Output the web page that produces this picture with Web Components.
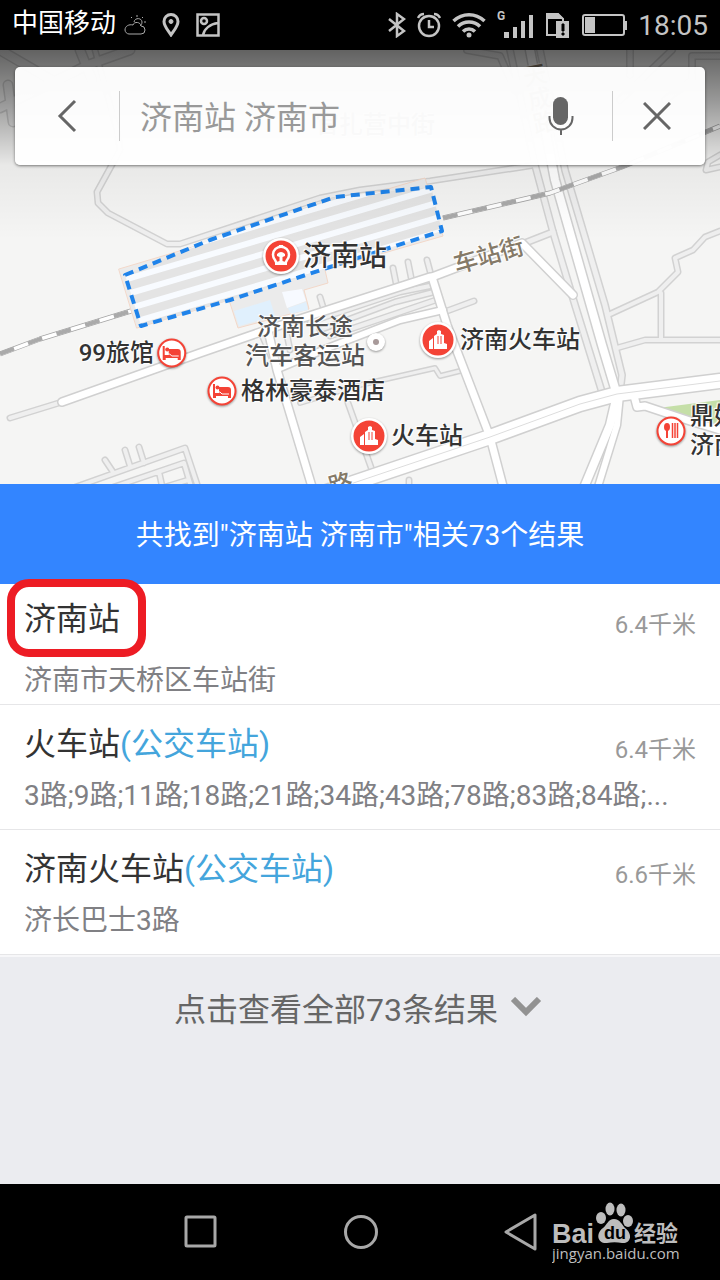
<!DOCTYPE html>
<html lang="zh-CN">
<head>
<meta charset="utf-8">
<meta name="viewport" content="width=device-width, initial-scale=1">
<title>济南站 济南市</title>
<style>
    body {
        margin: 0;
        background: #ebecf0;
        font-family: Roboto, "Noto Sans CJK SC", sans-serif;
        color: #333;
    }
</style>
</head>
<body>
<search-screen></search-screen>

<template id="status-bar">
<style>
    :host {
        display: flex;
        justify-content: space-between;
        align-items: center;
        height: 50px;
        padding: 0 12px;
        background: #000;
        color: #c4c4c4;
    }
    div {
        display: flex;
        align-items: center;
    }
    .left { gap: 16px; }
    .right { gap: 11px; }
    .carrier {
        font-size: 26px;
        line-height: 28px;
        padding-bottom: 4px;
        color: #fff;
        margin-right: -8px;
    }
    .clock { font-size: 28px; }
    svg { display: block; }
</style>
<div class="left">
    <span class="carrier">中国移动</span>
    <svg width="22" height="22" viewBox="0 0 22 22" fill="none" stroke="#aaa"><path d="M5 20h12a4 4 0 0 0 0-8c0-4-7-5-8-1-4-1-8 1-8 5 0 2 2 4 4 4zM10 8c1-5 8-4 8 0 0 2-1 3-2 4M13 1v2M19 3l-1 1M20 8h2M7 3l1 1"/></svg>
    <svg width="18" height="24" viewBox="0 0 18 24" fill="none" stroke="#c4c4c4" stroke-width="3"><path d="M9 22C5 16 2 13 2 8.500a7 7 0 0 1 14 0C16 13 13 16 9 22z"/><circle cx="9" cy="8.500" r="2" fill="#c4c4c4" stroke-width="1"/></svg>
    <svg width="24" height="24" viewBox="0 0 24 24" fill="none" stroke="#c4c4c4" stroke-width="2.500"><path d="M1.500 1.500h21v21h-21zM7 22c1-6 7-11 15-12"/><circle cx="8" cy="8" r="3"/></svg>
</div>
<div class="right">
    <svg width="18" height="26" viewBox="0 0 18 26" fill="none" stroke="#c4c4c4" stroke-width="2.500"><path d="M1 7l15 12-7 5V2l7 5L1 19"/></svg>
    <svg width="24" height="26" viewBox="0 0 24 26" fill="none" stroke="#c4c4c4" stroke-width="2.500"><circle cx="12" cy="14" r="10"/><path d="M12 8v7h5M1 6c1-2 3-4 6-4M23 6c-1-2-3-4-6-4"/></svg>
    <svg width="34" height="26" viewBox="0 0 34 26" fill="none" stroke="#c4c4c4" stroke-width="3.500"><path d="M1.500 9c9-8.500 22-8.500 31 0M6 14.500c6-6 16-6 22 0M11 19.500c3.500-3.500 8.500-3.500 12 0"/><circle cx="17" cy="23" r="2.500" fill="#c4c4c4" stroke="none"/></svg>
    <svg width="37" height="30" viewBox="0 0 37 30" fill="#c4c4c4"><path d="M7 22h5v6H7zM16 17h4v11h-4zM24 11h4v17h-4zM32 5h4v23h-4z"/><text x="0" y="10" font-size="12" font-weight="700">G</text></svg>
    <svg width="26" height="26" viewBox="0 0 26 26"><path d="M2 2h11l5 5v16H2z" fill="none" stroke="#c4c4c4" stroke-width="2"/><path d="M2 1h11l6 6H2zM11 9h13v17H11z" fill="#c4c4c4"/><path d="M17 12h2v7h-2zM17 21h2v2h-2z" stroke="#000" stroke-width="1"/></svg>
    <svg width="45" height="22" viewBox="0 0 45 22"><rect x="1" y="1" width="41" height="20" rx="2" fill="none" stroke="#c4c4c4" stroke-width="2"/><path d="M3 3h10v16H3zM43 7h2v9h-2z" fill="#c4c4c4"/></svg>
    <span class="clock">18:05</span>
</div>
</template>

<template id="search-box">
<style>
    :host {
        display: flex;
        align-items: center;
        height: 98px;
        background: rgba(255, 255, 255, .97);
        border-radius: 5px;
        box-shadow: 0 1px 3px rgba(0, 0, 0, .5);
    }
    button {
        border: 0;
        padding: 0;
        background: none;
        display: flex;
        justify-content: center;
        align-items: center;
        align-self: stretch;
    }
    .back { width: 104px; }
    .voice { width: 102px; }
    .clear {
        width: 92px;
        padding-right: 4px;
    }
    hr {
        width: 1px;
        height: 50px;
        margin: 0;
        border: 0;
        background: #ccc;
    }
    input {
        flex: 1;
        min-width: 0;
        border: 0;
        padding: 4px 0 0 20px;
        outline: 0;
        background: none;
        font: inherit;
        font-size: 32px;
        line-height: 48px;
        color: #999;
    }
</style>
<button class="back" aria-label="返回"><svg width="20" height="34" viewBox="0 0 20 34" fill="none" stroke="#666" stroke-width="3"><path d="M18 2L3 17l15 15"/></svg></button>
<hr>
<input type="text" aria-label="搜索" value="济南站 济南市">
<button class="voice" aria-label="语音搜索"><svg width="26" height="40" viewBox="0 0 26 40"><rect x="5" y="1" width="15" height="28" rx="7.500" fill="#666"/><path d="M1.500 20v2a11 11 0 0 0 23 0v-2M13 33v6" fill="none" stroke="#666" stroke-width="2"/></svg></button>
<hr>
<button class="clear" aria-label="清除"><svg width="28" height="28" viewBox="0 0 28 28" stroke="#666" stroke-width="3"><path d="M1 1l26 26M27 1L1 27"/></svg></button>
</template>

<template id="map-pin">
<style>
    :host {
        position: absolute;
        display: flex;
        align-items: center;
        gap: 4px;
        transform: translate(-18px, -50%);
        font-size: 24px;
        line-height: 29px;
        font-weight: 500;
        color: #333;
        white-space: nowrap;
        text-shadow: 0 0 2px #fff, 1px 1px 1px #fff, -1px -1px 1px #fff;
    }
    :host([small]) { transform: translate(-15px, -50%); }
    :host([left]) {
        flex-direction: row-reverse;
        gap: 3px;
        transform: translate(calc(-100% + 15px), -50%);
    }
    :host([large]) { font-size: 28px; }
    :host([road]) {
        transform: translate(-50%, -50%) rotate(-16deg);
        color: #857a68;
    }
    :host([tall]) {
        transform: translate(-50%, -50%) rotate(-12deg);
        writing-mode: vertical-rl;
    }
    :host([note]) {
        transform: translate(-50%, -50%);
        text-align: center;
        color: #555;
    }
    svg {
        display: block;
        overflow: visible;
        filter: drop-shadow(0 1px 1px rgba(0, 0, 0, .4));
    }
</style>
<slot></slot>
</template>

<template id="city-map">
<style>
    :host {
        position: relative;
        display: block;
        aspect-ratio: 720 / 434;
        overflow: hidden;
        background: #f5f5f4;
    }
    .ground {
        display: block;
        width: 100%;
        height: 100%;
    }
    .shade {
        position: absolute;
        inset: 0;
        background: linear-gradient(rgba(0, 0, 0, .6) 0, rgba(0, 0, 0, .38) 50px, rgba(0, 0, 0, .05) 115px, transparent 190px);
    }
    .bar {
        position: absolute;
        top: 17px;
        left: 15px;
        right: 15px;
    }
</style>
<svg class="ground" viewBox="0 50 720 434" preserveAspectRatio="xMidYMid slice" fill="none" stroke-linecap="round" stroke-linejoin="round">
    <clipPath id="tracks"><path d="M125 275L210 240 335 197 431 187 442 231 330 267 230 300 141 326z"/></clipPath>
    <path d="M658 408L720 400V430L690 421z" fill="#c5dfa8"/>
    <g id="minor"></g>
    <g id="major"></g>
    <path d="M300 501L490 437 580 404 617 394 720 381" stroke="#ddd"/>
    <g stroke-linecap="butt">
        <path d="M0 354L40 339 131 311M443 218L550 193 583 181 622 167 720 126" stroke="#a4a4a4" stroke-width="5"/>
        <path d="M0 354L40 339 131 311M443 218L550 193 583 181 622 167 720 126" stroke="#fff" stroke-width="3.500"/>
        <path d="M0 354L40 339 131 311M443 218L550 193 583 181 622 167 720 126" stroke="#aaa" stroke-width="4" stroke-dasharray="15 15"/>
    </g>
    <path d="M119 269L300 215 425 178 443 236 325 270 328 283 304 290 309 309 238 328 229 300 137 328z" fill="#ebebeb" stroke="#f3d8c9"/>
    <path d="M234 311L270 300 275 316 239 326zM288 308L306 302 308 310 291 314z" fill="#e0f0fd"/>
    <path d="M282 292L302 289 306 301 287 308z" fill="#f7faff"/>
    <g clip-path="url(#tracks)">
        <path d="M100 160h360v180H100z" fill="#e4e4e4"/>
        <path id="stripes" stroke="#f8fbff" stroke-width="6"/>
    </g>
    <path d="M125 275L210 240 335 197 431 187 442 231 330 267 230 300 141 326z" stroke="#1f83ea" stroke-width="4" stroke-linecap="butt" stroke-dasharray="9 6"/>
</svg>
<slot></slot>
<div class="shade"></div>
<div class="bar"><slot name="bar"></slot></div>
</template>

<template id="result-banner">
<style>
    :host {
        display: flex;
        justify-content: center;
        align-items: center;
        height: 96px;
        padding-top: 4px;
        background: #3385ff;
        color: #fff;
        font-size: 28px;
        line-height: 40px;
    }
</style>
<slot></slot>
</template>

<template id="result-item">
<style>
    :host {
        position: relative;
        display: flex;
        flex-direction: column;
        gap: 14px;
        padding: 19px 24px 15px;
        border-bottom: 1px solid #e6e6e8;
        background: #fff;
    }
    :host([marked]) {
        gap: 24px;
        padding: 15px 24px 5px;
    }
    :host([marked])::after {
        content: "";
        position: absolute;
        top: -5px;
        left: 7px;
        width: 123px;
        height: 62px;
        border: 8px solid #ed1c24;
        border-radius: 22px;
    }
    header {
        display: flex;
        justify-content: space-between;
        align-items: flex-end;
    }
    h2 {
        margin: 0;
        font-size: 32px;
        font-weight: 400;
        line-height: 40px;
    }
    span {
        color: #999;
        font-size: 24px;
        line-height: 28px;
    }
    p {
        margin: 0;
        overflow: hidden;
        white-space: nowrap;
        color: #808084;
        font-size: 28px;
        line-height: 36px;
    }
    ::slotted(em) {
        font-style: normal;
        color: #44a5dc;
    }
</style>
<header>
    <h2><slot></slot></h2>
    <span><slot name="distance"></slot></span>
</header>
<p><slot name="detail"></slot></p>
</template>

<template id="more-button">
<style>
    :host {
        flex: 1;
        display: block;
        border-top: 2px solid #f7f7f9;
    }
    button {
        display: flex;
        justify-content: center;
        align-items: center;
        gap: 12px;
        width: 100%;
        height: 100px;
        padding: 0 4px 0 0;
        border: 0;
        background: none;
        font: inherit;
        font-size: 32px;
        color: #666;
    }
</style>
<button><slot></slot><svg width="32" height="20" viewBox="0 0 32 20" fill="none" stroke="#929292" stroke-width="6"><path d="M3 2l13 13L29 2"/></svg></button>
</template>

<template id="nav-bar">
<style>
    :host {
        position: relative;
        display: flex;
        justify-content: center;
        align-items: center;
        gap: 124px;
        height: 96px;
        background: #000;
    }
    button {
        border: 0;
        padding: 0;
        background: none;
    }
    svg { display: block; }
    .watermark {
        position: absolute;
        right: 40px;
        bottom: 14px;
    }
</style>
<button aria-label="最近任务"><svg width="36" height="40" viewBox="0 0 36 40" fill="none" stroke="#a8a8a8" stroke-width="3"><rect x="4" y="5" width="29" height="29" rx="1"/></svg></button>
<button aria-label="主页"><svg width="36" height="40" viewBox="0 0 36 40" fill="none" stroke="#a8a8a8" stroke-width="3"><circle cx="19" cy="20" r="15.500"/></svg></button>
<button aria-label="后退"><svg width="36" height="40" viewBox="0 0 36 40" fill="none" stroke="#a8a8a8" stroke-width="3" stroke-linejoin="round"><path d="M33 3v34L4 20z"/></svg></button>
<svg class="watermark" width="128" height="64" viewBox="0 0 128 64" fill="#bdbdbd">
    <text x="0" y="41" font-family="Liberation Sans" font-size="27" font-weight="700">Bai</text>
    <ellipse cx="49" cy="16" rx="5" ry="6"/><ellipse cx="58" cy="7" rx="4.500" ry="6.500"/><ellipse cx="69" cy="8" rx="4.500" ry="6.500"/><ellipse cx="76" cy="19" rx="5" ry="6"/>
    <path d="M62 17c6 0 8 6 11 9 9 7 5 16-3 15-5-1-10-1-15 0-9 1-12-9-4-15 4-3 5-9 11-9z"/>
    <text x="52" y="37" fill="#000" font-family="Liberation Sans" font-size="18" font-weight="700">du</text>
    <text x="82" y="39" font-family="Noto Sans CJK SC" font-size="22" font-weight="700">经验</text>
    <text x="0" y="57" font-family="Open Sans" font-size="15">jingyan.baidu.com</text>
</svg>
</template>

<template id="search-screen">
<style>
    :host {
        display: flex;
        flex-direction: column;
        min-height: 100vh;
    }
</style>
<status-bar></status-bar>
<city-map>
    <map-pin x="375" y="125" note>官扎营中街</map-pin>
    <map-pin x="537" y="99" road tall>天成路</map-pin>
    <map-pin x="489" y="256" road>车站街</map-pin>
    <map-pin x="341" y="485" road>路</map-pin>
    <map-pin x="305" y="342" note>济南长途<br>汽车客运站</map-pin>
    <map-pin x="376" y="342" icon="dot"></map-pin>
    <map-pin x="281" y="256" icon="station" large>济南站</map-pin>
    <map-pin x="438" y="340" icon="building">济南火车站</map-pin>
    <map-pin x="369" y="436" icon="building">火车站</map-pin>
    <map-pin x="172" y="353" icon="bed" small left>99旅馆</map-pin>
    <map-pin x="222" y="391" icon="bed" small>格林豪泰酒店</map-pin>
    <map-pin x="671" y="431" icon="food" small>鼎好<br>济南</map-pin>
    <search-box slot="bar"></search-box>
</city-map>
<result-banner>共找到"济南站 济南市"相关73个结果</result-banner>
<result-item marked>济南站<span slot="distance">6.4千米</span><span slot="detail">济南市天桥区车站街</span></result-item>
<result-item>火车站<em>(公交车站)</em><span slot="distance">6.4千米</span><span slot="detail">3路;9路;11路;18路;21路;34路;43路;78路;83路;84路;...</span></result-item>
<result-item>济南火车站<em>(公交车站)</em><span slot="distance">6.6千米</span><span slot="detail">济长巴士3路</span></result-item>
<more-button>点击查看全部73条结果</more-button>
<nav-bar></nav-bar>
</template>

<script>
// Side streets: path and width
const minorRoads = [
    ['M95 50L117 130 120 150 97 192 98 203 108 213 167 244 180 244 320 198 360 190 430 181 535 165', 4],
    ['M10 418L62 402', 4],
    ['M0 50L55 82 M0 108L88 65 130 50 M80 50L92 80 M8 85L13 122', 8],
    ['M467 50L500 56 515 90 M630 50V75 M720 56H692V80L665 100 M672 50L620 100', 5],
    ['M720 155L708 162 706 170 720 167', 4],
    ['M510 50L535 165 553 232 575 305 602 392', 5],
    ['M540 50L565 170 605 305 622 375 620 392', 5],
    ['M525 243L553 232', 5],
    ['M300 318L425 278 M310 322L400 292 430 286 M320 330L395 302 434 292 M330 336L436 300 M393 268L397 288 M408 262L412 282 M427 260L431 275', 4],
    ['M320 297L324 310 M447 311L474 301', 4],
    ['M262 335L276 368 M285 325L290 350', 4],
    ['M608 315L658 292 678 272 675 258 693 250 705 237 720 231 M661 293V340 M617 348L645 340H720', 4],
    ['M300 403L360 385 435 368 440 376 460 371', 3],
    ['M348 403L373 473 M409 480V490', 4],
    ['M70 489L185 448 199 490 M105 460L113 472 M125 450L130 466 M139 447L144 463 M105 490L184 463 192 490 M159 472L163 490 M165 487L188 480', 4]
]
const majorRoads = [
    ['M62 402L200 353 275 327 430 277', 7],
    ['M268 330L277 370 313 490', 7],
    ['M280 368L330 347 400 320 443 310', 6],
    ['M432 277L522 243 573 295', 7],
    ['M432 277L447 325 490 437 504 490', 7],
    ['M530 50L555 180 602 345 617 395', 8],
    ['M617 395L610 425 583 490', 8],
    ['M620 395L617 425 597 490', 6],
    ['M633 392L637 407 645 406 690 421 720 430', 7],
    ['M300 501L490 437 580 404 617 394 720 381', 14]
]

const icons = {
    station: '<circle cx="18" cy="18" r="18" fill="#fff"/><circle cx="18" cy="18" r="15.500" fill="#f44336"/><path d="M13.500 25l-1.500-3a8 8 0 1 1 12 0l-1.500 3" fill="none" stroke="#fff" stroke-width="2.500"/><path d="M16 7h4l1 3h-6zM14 16q4-4 8 0v2l-2.500 1v4l4.500 1.500V27H12v-2.500l4.500-1.500v-4L14 18z" fill="#fff"/>',
    building: '<circle cx="18" cy="18" r="18" fill="#fff"/><circle cx="18" cy="18" r="15.500" fill="#f44336"/><path d="M9 27v-8l4-3v11zM14 27V14l3-2V9l2-1 2 1v3l3 1v8l3 1v5z" fill="#fff"/><path d="M18 14v8M21 14v8" stroke="#f44336"/>',
    bed: '<circle cx="15" cy="15" r="13.500" fill="#fff" stroke="#f44336" stroke-width="2"/><path d="M6 8h2v9h4v-6h9q3 0 3 3v8h-3v-2H9v2H6z" fill="#f44336"/><circle cx="10.500" cy="11.500" r="2" fill="#f44336"/><path d="M9 16h4l2 2h7" fill="none" stroke="#fff"/>',
    food: '<circle cx="15" cy="15" r="13.500" fill="#fff" stroke="#f44336" stroke-width="2"/><ellipse cx="11" cy="11" rx="3" ry="4" fill="#f44336"/><path d="M11 12v10" stroke="#f44336" stroke-width="2"/><path d="M16.500 7v15M19 7v15M21.500 7v15" stroke="#f44336" stroke-width="1.500"/>',
    dot: '<circle cx="18" cy="9" r="9" fill="#fff"/><circle cx="18" cy="9" r="3" fill="#a89a9a"/>'
}
const iconSizes = { station: [36, 36], building: [36, 36], bed: [30, 30], food: [30, 30], dot: [36, 18] }

// A base class that clones the template with the same id as the tag.
class BaseElement extends HTMLElement {
    constructor() {
        super()
        this.attachShadow({ mode: 'open' })
        .appendChild(document.getElementById(this.localName).content.cloneNode(true))
    }
}

function drawRoads(group, roads, edge, fill) {
    const outer = roads.map(([d, w]) => `<path d="${d}" stroke="${edge}" stroke-width="${w + 3}"/>`)
    const inner = roads.map(([d, w]) => `<path d="${d}" stroke="${fill}" stroke-width="${w}"/>`)
    group.innerHTML = outer.concat(inner).join('')
}

customElements.define('map-pin', class extends BaseElement {
    connectedCallback() {
        this.style.left = this.getAttribute('x') / 720 * 100 + '%'
        this.style.top = (this.getAttribute('y') - 50) / 434 * 100 + '%'
        const icon = this.getAttribute('icon')
        if (icon) {
            const [w, h] = iconSizes[icon]
            this.shadowRoot.querySelector('slot').insertAdjacentHTML('beforebegin',
                `<svg width="${w}" height="${h}" viewBox="0 0 ${w} ${h}">${icons[icon]}</svg>`)
        }
    }
})

customElements.define('city-map', class extends BaseElement {
    connectedCallback() {
        const root = this.shadowRoot
        drawRoads(root.querySelector('#minor'), minorRoads, '#d2d2d2', '#efefef')
        drawRoads(root.querySelector('#major'), majorRoads, '#d0d0d0', '#fff')
        // Platforms run parallel, 15 units apart
        let d = ''
        for (let i = 0; i < 8; i++) {
            d += `M100 ${272 + i * 15}L460 ${166 + i * 15}`
        }
        root.querySelector('#stripes').setAttribute('d', d)
    }
})

for (const name of ['status-bar', 'search-box', 'result-banner', 'result-item', 'more-button', 'nav-bar', 'search-screen']) {
    customElements.define(name, class extends BaseElement {})
}
</script>
</body>
</html>
